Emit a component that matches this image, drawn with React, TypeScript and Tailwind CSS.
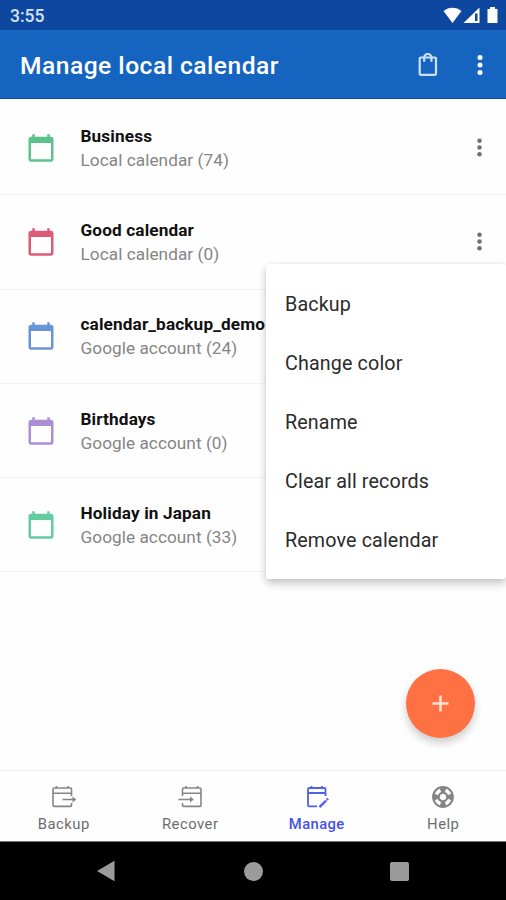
import clsx from "clsx";
import type { ReactNode } from "react";

const calendars = [
    { name: "Business", account: "Local calendar (74)", color: "text-[#5cc28b]" },
    { name: "Good calendar", account: "Local calendar (0)", color: "text-[#dc5a7a]" },
    { name: "calendar_backup_demo", account: "Google account (24)", color: "text-[#6796d8]" },
    { name: "Birthdays", account: "Google account (0)", color: "text-[#ad8ed6]" },
    { name: "Holiday in Japan", account: "Google account (33)", color: "text-[#63cba0]" },
];

const menuItems = ["Backup", "Change color", "Rename", "Clear all records", "Remove calendar"];

function CalendarIcon({ className }: { className?: string }) {
    return (
        <svg viewBox="0 0 24 24" fill="currentColor" className={clsx("w-[30px] h-[30px]", className)}>
            <path d="M20 3h-1V1h-2v2H7V1H5v2H4c-1.1 0-2 .9-2 2v16c0 1.1.9 2 2 2h16c1.1 0 2-.9 2-2V5c0-1.1-.9-2-2-2zm0 18H4V8h16v13z" />
        </svg>
    );
}

function Dots({ className }: { className?: string }) {
    return (
        <svg viewBox="0 0 24 24" fill="currentColor" className={className}>
            <circle cx="12" cy="6" r="2" />
            <circle cx="12" cy="12" r="2" />
            <circle cx="12" cy="18" r="2" />
        </svg>
    );
}

function StatusBar() {
    return (
        <div className="h-[30px] shrink-0 bg-[#0d479f] flex items-center justify-between pl-[10px] pr-[7px] text-white">
            <span className="text-[17.5px] leading-none pt-[3px] font-medium text-[#d6e1f4]">3:55</span>
            <svg width="56" height="18" viewBox="0 0 56 18" fill="currentColor">
                <path d="M0.5 5C5.5 0.500 13.500 0.500 18.500 5L9.500 17z" />
                <path d="M36.500 1.500v15.500H20.500z" />
                <path d="M32 7.500h2.500v7.500h-2.500z" fill="#0d479f" />
                <path d="M47 1h5v2h2.500v14h-10V3h2.500z" />
            </svg>
        </div>
    );
}

function AppBar() {
    return (
        <header className="h-[69px] shrink-0 bg-[#1565c0] border-b border-[#0d4fa8] flex items-center pl-[20px] pr-[11px] text-white">
            <h1 className="flex-1 text-[24.6px] font-medium tracking-[0.49px] pt-[4px]">Manage local calendar</h1>
            <svg
                width="20"
                height="24"
                viewBox="0 0 20 24"
                fill="none"
                stroke="#cde2f8"
                strokeWidth="2.200"
                strokeLinejoin="round"
                className="mr-[27px] mt-px"
            >
                <rect x="1.700" y="4.500" width="16.300" height="17.300" rx="1" />
                <path d="M6.200 8.800V4.600a3.600 3.600 0 0 1 7.200 0v4.200" />
            </svg>
            <Dots className="w-[30px] h-[30px] mt-px" />
        </header>
    );
}

function CalendarRow({ name, account, color }: (typeof calendars)[number]) {
    return (
        <li className="h-[94.3px] border-b border-[#f3f3f3] flex items-center pl-[26px] pr-[13px]">
            <CalendarIcon className={color} />
            <div className="flex-1 pl-[24.5px]">
                <p className="text-[17.2px] leading-6 font-bold tracking-[0.13px] text-[#111]">{name}</p>
                <p className="text-[17.2px] leading-6 tracking-[0.06px] text-[#858585]">{account}</p>
            </div>
            <Dots className="w-[27px] h-[27px] text-[#707070]" />
        </li>
    );
}

function ContextMenu() {
    return (
        <ul className="absolute z-10 left-[266px] right-0 top-[264px] h-[315px] pt-[11px] bg-white rounded-[3px] shadow-[0_5px_9px_rgba(0,0,0,0.2),0_0_4px_rgba(0,0,0,0.08)]">
            {menuItems.map((item) => (
                <li key={item} className="h-[59px] flex items-center pl-[19px] text-[19.7px] tracking-[0.14px] text-[#2b2b2b]">
                    {item}
                </li>
            ))}
        </ul>
    );
}

function BackupIcon() {
    return (
        <svg width="26" height="24" viewBox="0 0 26 24" fill="none" stroke="currentColor" strokeWidth="1.600">
            <path d="M20.500 11V4.200Q20.500 3 19.300 3H3.200Q2 3 2 4.200V20.200Q2 21.400 3.200 21.400H19.300Q20.500 21.400 20.500 20.200V18" />
            <path d="M2 8.300h18.500M5.500 1v2M17 1v2M11.500 14.500h12" />
            <path d="M21.500 11.600l3.800 2.900-3.800 2.900z" fill="currentColor" stroke="none" />
        </svg>
    );
}

function RecoverIcon() {
    return (
        <svg width="26" height="24" viewBox="0 0 26 24" fill="none" stroke="currentColor" strokeWidth="1.600">
            <path d="M5.500 11V4.200Q5.500 3 6.700 3H22.800Q24 3 24 4.200V20.200Q24 21.400 22.800 21.400H6.700Q5.500 21.400 5.500 20.200V18" />
            <path d="M5.500 8.300H24M9 1v2M20.500 1v2M1.500 14.500H14" />
            <path d="M13 11.600l3.800 2.900-3.800 2.900z" fill="currentColor" stroke="none" />
        </svg>
    );
}

function ManageIcon() {
    return (
        <svg width="26" height="24" viewBox="0 0 26 24" fill="none" stroke="currentColor" strokeWidth="1.800">
            <path d="M13 21.400H5.200Q4 21.400 4 20.200V4.200Q4 3 5.200 3H20.300Q21.500 3 21.500 4.200V11" />
            <path d="M4 8h17.500M7.500 1v2M18 1v2" />
            <path d="M15.500 22.200l6.700-6.700" strokeWidth="2.400" />
            <path d="M22.800 14.900l1.200-1.200" strokeWidth="2.400" />
        </svg>
    );
}

function HelpIcon() {
    return (
        <svg width="26" height="24" viewBox="1 1 22 22" fill="currentColor">
            <path d="M12 2C6.48 2 2 6.480 2 12s4.480 10 10 10 10-4.480 10-10S17.520 2 12 2zm7.460 7.120l-2.780 1.150c-.51-1.360-1.580-2.440-2.950-2.940l1.150-2.780c2.100.8 3.770 2.470 4.580 4.570zM12 15c-1.660 0-3-1.340-3-3s1.340-3 3-3 3 1.340 3 3-1.340 3-3 3zM9.130 4.540l1.170 2.780c-1.380.5-2.470 1.590-2.980 2.970L4.540 9.130c.81-2.110 2.480-3.780 4.590-4.590zM4.540 14.870l2.780-1.150c.51 1.380 1.590 2.460 2.970 2.960l-1.170 2.780c-2.100-.81-3.770-2.480-4.580-4.590zm10.340 4.590l-1.150-2.780c1.370-.51 2.450-1.590 2.950-2.970l2.780 1.170c-.81 2.100-2.480 3.770-4.580 4.580z" />
        </svg>
    );
}

const tabs: { label: string; icon: ReactNode; active?: boolean }[] = [
    { label: "Backup", icon: <BackupIcon /> },
    { label: "Recover", icon: <RecoverIcon /> },
    { label: "Manage", icon: <ManageIcon />, active: true },
    { label: "Help", icon: <HelpIcon /> },
];

function BottomNav() {
    return (
        <nav className="h-[71px] shrink-0 border-t border-[#f0f0f0] grid grid-cols-4">
            {tabs.map(({ label, icon, active }) => (
                <div
                    key={label}
                    className={clsx(
                        "flex flex-col items-center pt-[14px] pl-px",
                        active ? "text-[#4f60ea]" : "text-[#858585]"
                    )}
                >
                    {icon}
                    <span
                        className={clsx(
                            "mt-[5px] text-[14.8px] leading-5",
                            active ? "font-medium tracking-[0.4px] text-[#4650ea]" : "tracking-[0.5px] text-[#6c6c6c]"
                        )}
                    >
                        {label}
                    </span>
                </div>
            ))}
        </nav>
    );
}

function SystemNav() {
    return (
        <div className="h-[59px] shrink-0 bg-black border-t border-[#777] flex items-center justify-between pl-[96px] pr-[97px] text-[#9b9b9b]">
            <svg width="19" height="22" viewBox="0 0 19 22" fill="currentColor">
                <path d="M1 11L18.500 0.800v20.400z" />
            </svg>
            <div className="ml-px w-[19px] h-[19px] rounded-full bg-current" />
            <div className="w-[19px] h-[19px] rounded-[2px] bg-current" />
        </div>
    );
}

export default function App() {
    return (
        <div className="relative w-[506px] h-[900px] flex flex-col overflow-hidden bg-[#fefefe] font-[Roboto,sans-serif]">
            <StatusBar />
            <AppBar />
            <main className="flex-1 min-h-0 pt-[2px]">
                <ul>
                    {calendars.map((calendar) => (
                        <CalendarRow key={calendar.name} {...calendar} />
                    ))}
                </ul>
            </main>
            <BottomNav />
            <SystemNav />

            <ContextMenu />
            <button className="absolute left-[405.5px] top-[669px] w-[69px] h-[69px] rounded-full bg-[#ff7043] flex items-center justify-center shadow-[0_5px_8px_rgba(0,0,0,0.2)]">
                <svg width="17" height="17" viewBox="0 0 18 18" stroke="#ffe3da" strokeWidth="2.600">
                    <path d="M9 0.500v17M0.500 9h17" />
                </svg>
            </button>
        </div>
    );
}
